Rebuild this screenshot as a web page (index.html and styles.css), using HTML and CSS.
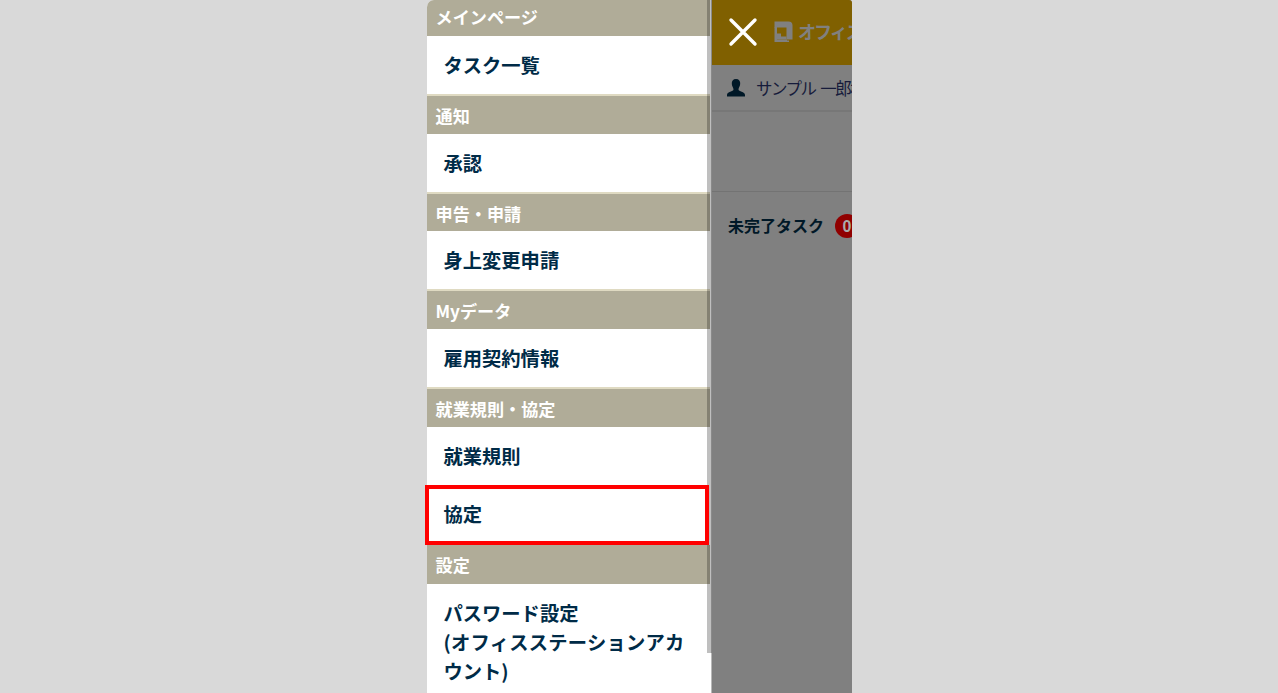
FILE: index.html
```html
<!DOCTYPE html>
<html lang="ja">

<head>
    <meta charset="utf-8">
    <title>メインページ</title>
    <link rel="stylesheet" href="styles.css">
</head>

<body>
    <div class="phone">
        <nav class="menu">
            <h2 class="menu-title first">メインページ</h2>
            <a class="menu-item">タスク一覧</a>
            <h2 class="menu-title line">通知</h2>
            <a class="menu-item">承認</a>
            <h2 class="menu-title line">申告・申請</h2>
            <a class="menu-item">身上変更申請</a>
            <h2 class="menu-title line">Myデータ</h2>
            <a class="menu-item">雇用契約情報</a>
            <h2 class="menu-title line">就業規則・協定</h2>
            <a class="menu-item">就業規則</a>
            <a class="menu-item current">協定</a>
            <h2 class="menu-title">設定</h2>
            <a class="menu-item long">パスワード設定<br><span class="wide">(オフィスステーションアカ</span><br>ウント)</a>
            <span class="scrollbar"></span>
        </nav>
        <main class="page">
            <header class="header">
                <svg class="close" width="30" height="30" viewBox="0 0 30 30">
                    <path d="M3 3L27 27M27 3L3 27" fill="none" stroke="#fff" stroke-width="3.4" stroke-linecap="round"/>
                </svg>
                <svg class="logo" width="19" height="22" viewBox="0 0 19 22">
                    <path fill="#808080" d="M.5 .5H14.500Q18.500 .5 18.500 4.500V18.500H12.500V6.500H.5Z"/>
                    <path fill="#808080" d="M.5 6H3V18.500H13V19.500H15V21H.5Z"/>
                    <path fill="#808080" d="M3 12.500H7V18.500H3Z"/>
                    <path fill="#808080" d="M7 15.500H12.500V18.500H7Z"/>
                </svg>
                <span class="brand">オフィス</span>
            </header>
            <div class="user">
                <svg class="person" width="20" height="20" viewBox="0 0 20 20">
                    <path fill="#001827" d="M10 1C13 1 14.500 3 14.200 6C14 8.500 12.500 9.500 12.500 11.500C12.500 13.500 19 13.500 19 17V18.500H1V17C1 13.500 7.500 13.500 7.500 11.500C7.500 9.500 6 8.500 5.800 6C5.500 3 7 1 10 1Z"/>
                </svg>
                <span class="name">サンプル 一郎様</span>
            </div>
            <div class="blank"></div>
            <div class="tasks">
                <span>未完了タスク</span>
                <span class="badge">0</span>
            </div>
        </main>
    </div>
</body>

</html>
```

FILE: styles.css
```css
*, *::before {
    box-sizing: border-box;
}
body {
    margin: 0;
    height: 693px;
    overflow: hidden;
    background: #d9d9d9;
    color: #002b47;
    font-family: "Noto Sans CJK JP", sans-serif;
}
.phone {
    display: flex;
    width: 425px;
    height: 693px;
    margin-left: 427px;
}
.menu {
    position: relative;
    width: 285px;
    flex: none;
    background: #fff;
    border-right: 1px solid #b8b8b8;
    border-top-left-radius: 7px;
}
.menu-title {
    height: 39px;
    margin: 0 1px 0 0;
    padding-left: 8.5px;
    background: #b0ac98;
    color: #fff;
    font-size: 17.15px;
    font-weight: 700;
    line-height: 39px;
    white-space: nowrap;
}
.first {
    height: 36px;
    line-height: 34px;
    border-top-left-radius: 7px;
}
.line {
    height: 39.7px;
    border-top: 2px solid #dfdac2;
}
.menu-item {
    display: block;
    height: 58px;
    padding-left: 16.5px;
    font-size: 19.3px;
    font-weight: 700;
    line-height: 58.5px;
    white-space: nowrap;
}
.current {
    position: relative;
    height: 60px;
}
.current::before {
    content: "";
    position: absolute;
    left: -2px;
    top: 0;
    z-index: 2;
    width: 284px;
    height: 60px;
    border: 4px solid #f00;
}
.long {
    height: 109px;
    padding-top: 15px;
    line-height: 29px;
}
.wide {
    letter-spacing: .25px;
}
.scrollbar {
    position: absolute;
    top: 0;
    right: -1px;
    width: 5px;
    height: 653px;
    background: rgba(0, 0, 0, .25);
}
.page {
    width: 140px;
    overflow: hidden;
    background: #808080;
    border-top-right-radius: 3px;
    white-space: nowrap;
}
.header {
    display: flex;
    align-items: center;
    height: 65px;
    padding: 0 0 2px 16px;
    background: #806000;
}
.close {
    flex: none;
}
.logo {
    flex: none;
    margin-left: 16px;
}
.brand {
    margin: -2px 0 0 5px;
    color: #808080;
    font-size: 18px;
    font-weight: 700;
    letter-spacing: -2px;
}
.user {
    display: flex;
    align-items: center;
    height: 47px;
    padding-left: 14px;
    border-bottom: 2px solid #777;
    color: #161b3b;
    font-size: 16.5px;
}
.person {
    flex: none;
    margin-right: 10px;
}
.name {
    letter-spacing: -1.5px;
    word-spacing: 2.5px;
}
.blank {
    height: 80px;
    border-bottom: 1px solid #737373;
}
.tasks {
    display: flex;
    align-items: center;
    height: 68px;
    padding-left: 16px;
    color: #001827;
    font-size: 16px;
    font-weight: 700;
}
.tasks span:first-child {
    margin-top: -2px;
}
.badge {
    flex: none;
    width: 24px;
    height: 24px;
    margin-left: 11px;
    border-radius: 50%;
    background: #900000;
    color: #aaa;
    font-family: "Liberation Sans", sans-serif;
    line-height: 25px;
    text-align: center;
}
```
